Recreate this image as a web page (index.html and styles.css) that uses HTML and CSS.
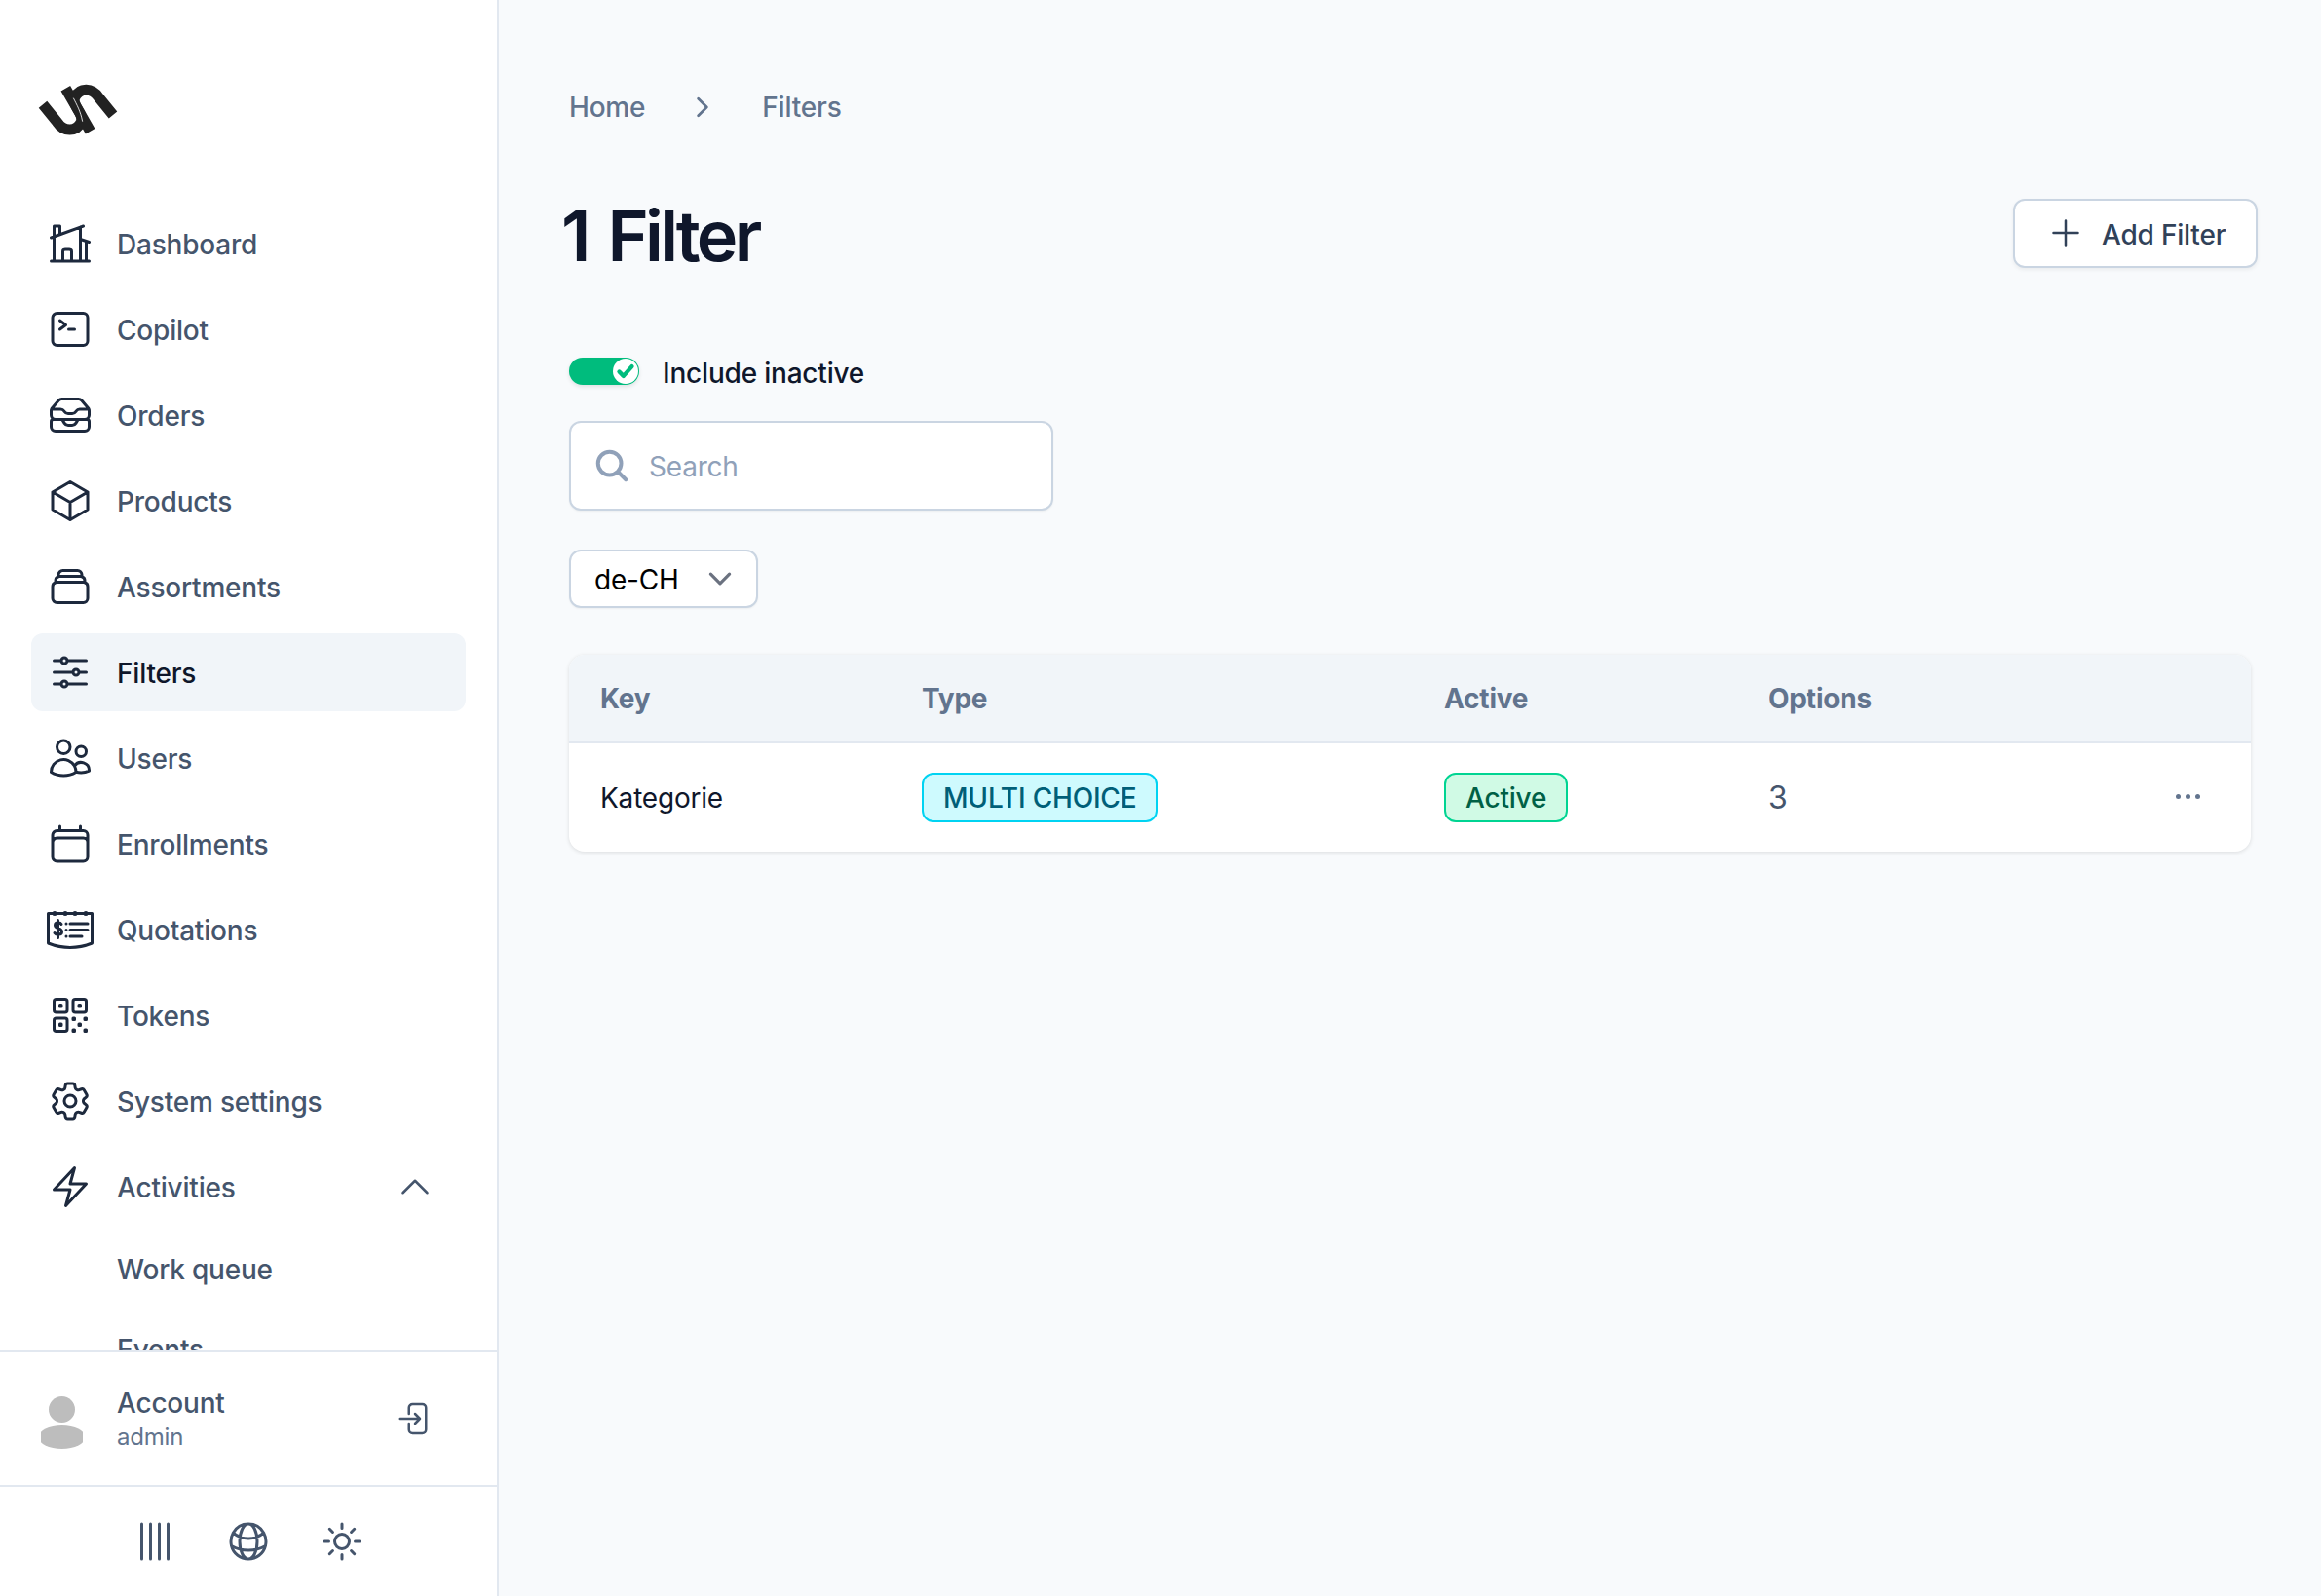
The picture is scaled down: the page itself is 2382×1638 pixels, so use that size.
FILE: index.html
```html
<!DOCTYPE html>
<html lang="en">
  <head>
    <meta charset="UTF-8" />
    <meta name="viewport" content="width=device-width, initial-scale=1.0" />
    <title>Filters</title>
    <link rel="stylesheet" href="styles.css">
  </head>

  <body>
    <div class="layout">
      <aside class="sidebar">
        <div class="logo-wrap">
          <svg class="logo" viewBox="0 0 360 240" fill="none" stroke="#222" stroke-width="33">
            <path d="M72 112L116 166C136 196 174 198 190 166C194 156 190 146 185 137L142 62" />
            <path d="M288 144L244 90C224 60 186 58 170 90C166 100 170 110 175 119L218 194" />
            <path d="M166 92C176 112 188 132 194 164" stroke="#fff" stroke-width="2.5" />
          </svg>
        </div>

        <nav class="nav">
          <a class="nav-item">
            <svg class="icon" viewBox="0 0 24 24"><path d="M8.25 21v-4.875c0-.621.504-1.125 1.125-1.125h2.25c.621 0 1.125.504 1.125 1.125V21m0 0h4.5V3.545M12.75 21h7.5V10.75M2.25 21h1.5m18 0h-18M2.25 9l4.5-1.636M18.75 3l-1.5.545m0 6.205l3 1m1.5.5l-1.5-.5M6.75 7.364V3h-3v18m3-13.636l10.5-3.819" /></svg>
            Dashboard
          </a>
          <a class="nav-item">
            <svg class="icon" viewBox="0 0 24 24"><path d="M6.75 7.5l3 2.25-3 2.25m4.5 0h3m-9 8.25h13.5A2.25 2.25 0 0021 18V6a2.25 2.25 0 00-2.25-2.25H5.25A2.25 2.25 0 003 6v12a2.25 2.25 0 002.25 2.25z" /></svg>
            Copilot
          </a>
          <a class="nav-item">
            <svg class="icon" viewBox="0 0 24 24"><path d="M7.875 14.25l1.214 1.942a2.25 2.25 0 001.908 1.058h2.006c.776 0 1.497-.4 1.908-1.058l1.214-1.942M2.41 9h4.636a2.25 2.25 0 011.872 1.002l.164.246a2.25 2.25 0 001.872 1.002h2.092a2.25 2.25 0 001.872-1.002l.164-.246A2.25 2.25 0 0116.954 9h4.636M2.41 9a2.25 2.25 0 00-.16.832V12a2.25 2.25 0 002.25 2.25h15A2.25 2.25 0 0021.75 12V9.832c0-.287-.055-.57-.16-.832M2.41 9a2.25 2.25 0 01.382-.632l3.285-3.832a2.25 2.25 0 011.708-.786h8.43c.657 0 1.281.287 1.709.786l3.284 3.832c.163.19.291.404.382.632M4.5 20.25h15A2.25 2.25 0 0021.75 18v-2.625c0-.621-.504-1.125-1.125-1.125H3.375c-.621 0-1.125.504-1.125 1.125V18a2.25 2.25 0 002.25 2.25z" /></svg>
            Orders
          </a>
          <a class="nav-item">
            <svg class="icon" viewBox="0 0 24 24"><path d="M21 7.5l-9-5.25L3 7.5m18 0l-9 5.25m9-5.25v9l-9 5.25M3 7.5l9 5.25M3 7.5v9l9 5.25m0-9v9" /></svg>
            Products
          </a>
          <a class="nav-item">
            <svg class="icon" viewBox="0 0 24 24"><path d="M6 6.878V6a2.25 2.25 0 012.25-2.25h7.5A2.25 2.25 0 0118 6v.878m-12 0c.235-.083.487-.128.75-.128h10.5c.263 0 .515.045.75.128m-12 0A2.25 2.25 0 004.5 9v.878m13.5-3A2.25 2.25 0 0119.5 9v.878m0 0a2.246 2.246 0 00-.75-.128H5.25c-.263 0-.515.045-.75.128m15 0A2.25 2.25 0 0121 12v6a2.25 2.25 0 01-2.25 2.25H5.25A2.25 2.25 0 013 18v-6c0-.98.626-1.813 1.5-2.122" /></svg>
            Assortments
          </a>
          <a class="nav-item active">
            <svg class="icon" viewBox="0 0 24 24"><path d="M10.5 6h9.75M10.5 6a1.5 1.5 0 11-3 0m3 0a1.5 1.5 0 10-3 0M3.75 6H7.5m3 12h9.75m-9.75 0a1.5 1.5 0 01-3 0m3 0a1.5 1.5 0 00-3 0m-3.75 0H7.5m9-6h3.75m-3.75 0a1.5 1.5 0 01-3 0m3 0a1.5 1.5 0 00-3 0m-9.75 0h9.75" /></svg>
            Filters
          </a>
          <a class="nav-item">
            <svg class="icon" viewBox="0 0 24 24"><path d="M15 19.128a9.38 9.38 0 002.625.372 9.337 9.337 0 004.121-.952 4.125 4.125 0 00-7.533-2.493M15 19.128v-.003c0-1.113-.285-2.16-.786-3.07M15 19.128v.106A12.318 12.318 0 018.624 21c-2.331 0-4.512-.645-6.374-1.766l-.001-.109a6.375 6.375 0 0111.964-3.07M12 6.375a3.375 3.375 0 11-6.75 0 3.375 3.375 0 016.75 0zm8.25 2.25a2.625 2.625 0 11-5.25 0 2.625 2.625 0 015.25 0z" /></svg>
            Users
          </a>
          <a class="nav-item">
            <svg class="icon" viewBox="0 0 24 24"><path d="M6.75 3v2.25M17.25 3v2.25M3 18.75V7.5a2.25 2.25 0 012.25-2.25h13.5A2.25 2.25 0 0121 7.5v11.25m-18 0A2.25 2.25 0 005.25 21h13.5A2.25 2.25 0 0021 18.75m-18 0v-7.5A2.25 2.25 0 015.25 9h13.5A2.25 2.25 0 0121 11.25v7.5" /></svg>
            Enrollments
          </a>
          <a class="nav-item">
            <svg class="icon icon-quote" viewBox="0 0 48 48">
              <path d="M1.5 7.5V38Q24 47 46.5 38V7.5H1.5Z" />
              <path d="M8 7.5h.01M19 7.5h.01M29 7.5h.01M40 7.5h.01" stroke-width="5" />
              <path d="M15 18.5C14 16.5 8.5 16 8.5 19.5C8.5 23.5 15.5 22 15.5 26.5C15.5 30 9.5 29.5 8 27.5M11.5 14.5V32.5" />
              <path d="M20 18h.01M20 24.5h.01M20 31h.01" />
              <path d="M24 18H42M24 24.5H42M24 31H36" />
            </svg>
            Quotations
          </a>
          <a class="nav-item">
            <svg class="icon" viewBox="0 0 24 24"><path d="M3.75 4.875c0-.621.504-1.125 1.125-1.125h4.5c.621 0 1.125.504 1.125 1.125v4.5c0 .621-.504 1.125-1.125 1.125h-4.5A1.125 1.125 0 013.75 9.375v-4.5zM3.75 14.625c0-.621.504-1.125 1.125-1.125h4.5c.621 0 1.125.504 1.125 1.125v4.5c0 .621-.504 1.125-1.125 1.125h-4.5a1.125 1.125 0 01-1.125-1.125v-4.5zM13.5 4.875c0-.621.504-1.125 1.125-1.125h4.5c.621 0 1.125.504 1.125 1.125v4.5c0 .621-.504 1.125-1.125 1.125h-4.5A1.125 1.125 0 0113.5 9.375v-4.5z" /><path d="M6.75 6.75h.75v.75h-.75v-.75zM6.75 16.5h.75v.75h-.75v-.75zM16.5 6.75h.75v.75h-.75v-.75zM13.5 13.5h.75v.75h-.75v-.75zM13.5 19.5h.75v.75h-.75v-.75zM19.5 13.5h.75v.75h-.75v-.75zM19.5 19.5h.75v.75h-.75v-.75zM16.5 16.5h.75v.75h-.75v-.75z" /></svg>
            Tokens
          </a>
          <a class="nav-item">
            <svg class="icon" viewBox="0 0 24 24"><path d="M9.594 3.94c.09-.542.56-.94 1.11-.94h2.593c.55 0 1.02.398 1.11.94l.213 1.281c.063.374.313.686.645.87.074.04.147.083.22.127.324.196.72.257 1.075.124l1.217-.456a1.125 1.125 0 011.37.49l1.296 2.247a1.125 1.125 0 01-.26 1.431l-1.003.827c-.293.24-.438.613-.431.992a6.759 6.759 0 010 .255c-.007.378.138.75.43.99l1.005.828c.424.35.534.954.26 1.43l-1.298 2.247a1.125 1.125 0 01-1.369.491l-1.217-.456c-.355-.133-.75-.072-1.076.124a6.57 6.57 0 01-.22.128c-.331.183-.581.495-.644.869l-.213 1.28c-.09.543-.56.941-1.11.941h-2.594c-.55 0-1.02-.398-1.11-.94l-.213-1.281c-.062-.374-.312-.686-.644-.87a6.52 6.52 0 01-.22-.127c-.325-.196-.72-.257-1.076-.124l-1.217.456a1.125 1.125 0 01-1.369-.49l-1.297-2.247a1.125 1.125 0 01.26-1.431l1.004-.827c.292-.24.437-.613.43-.992a6.932 6.932 0 010-.255c.007-.378-.138-.75-.43-.99l-1.004-.828a1.125 1.125 0 01-.26-1.43l1.297-2.247a1.125 1.125 0 011.37-.491l1.216.456c.356.133.751.072 1.076-.124.072-.044.146-.087.22-.128.332-.183.582-.495.644-.869l.214-1.281z" /><path d="M15 12a3 3 0 11-6 0 3 3 0 016 0z" /></svg>
            System settings
          </a>
          <a class="nav-item">
            <svg class="icon" viewBox="0 0 24 24"><path d="M3.75 13.5l10.5-11.25L12 10.5h8.25L9.75 21.75 12 13.5H3.75z" /></svg>
            Activities
            <svg class="icon icon-chevron" viewBox="0 0 24 24"><path d="M4.5 15.75l7.5-7.5 7.5 7.5" /></svg>
          </a>
          <div class="subnav">
            <a class="subnav-item">Work queue</a>
            <a class="subnav-item">Events</a>
          </div>
        </nav>

        <div class="account">
          <svg class="avatar" viewBox="0 0 43 58">
            <circle cx="21.5" cy="17.5" r="13.5" />
            <ellipse cx="21.5" cy="46" rx="24" ry="12" />
          </svg>
          <div class="account-text">
            <div class="account-name">Account</div>
            <div class="account-user">admin</div>
          </div>
          <svg class="icon icon-login" viewBox="0 0 24 24"><path d="M8.25 9V5.25A2.25 2.25 0 0110.5 3h6a2.25 2.25 0 012.25 2.25v13.5A2.25 2.25 0 0116.5 21h-6a2.25 2.25 0 01-2.25-2.25V15M12 9l3 3m0 0l-3 3m3-3H2.25" /></svg>
        </div>

        <div class="sidebar-tools">
          <svg class="icon" viewBox="0 0 24 24"><path d="M5.25 3v18M9.75 3v18M14.25 3v18M18.75 3v18" /></svg>
          <svg class="icon" viewBox="0 0 24 24"><path d="M12 21a9.004 9.004 0 008.716-6.747M12 21a9.004 9.004 0 01-8.716-6.747M12 21c2.485 0 4.5-4.03 4.5-9S14.485 3 12 3m0 18c-2.485 0-4.5-4.03-4.5-9S9.515 3 12 3m0 0a8.997 8.997 0 017.843 4.582M12 3a8.997 8.997 0 00-7.843 4.582m15.686 0A11.953 11.953 0 0112 10.5c-2.998 0-5.74-1.1-7.843-2.918m15.686 0A8.959 8.959 0 0121 12c0 .778-.099 1.533-.284 2.253m0 0A17.919 17.919 0 0112 16.5c-3.162 0-6.133-.815-8.716-2.247m0 0A9.015 9.015 0 013 12c0-1.605.42-3.113 1.157-4.418" /></svg>
          <svg class="icon" viewBox="0 0 24 24"><path d="M12 3v2.25m6.364.386l-1.591 1.591M21 12h-2.25m-.386 6.364l-1.591-1.591M12 18.75V21m-4.773-4.227l-1.591 1.591M5.25 12H3m4.227-4.773L5.636 5.636M15.75 12a3.75 3.75 0 11-7.5 0 3.75 3.75 0 017.5 0z" /></svg>
        </div>
      </aside>

      <main class="main">
        <div class="breadcrumb">
          <a>Home</a>
          <svg class="crumb-sep" viewBox="0 0 24 24"><path d="M8.25 4.5l7.5 7.5-7.5 7.5" /></svg>
          <a>Filters</a>
        </div>

        <div class="page-head">
          <h1>1 Filter</h1>
          <button class="add-btn">
            <svg class="plus" viewBox="0 0 24 24"><path d="M12 4.5v15m7.5-7.5h-15" /></svg>
            Add Filter
          </button>
        </div>

        <label class="toggle-row">
          <span class="toggle">
            <span class="toggle-knob">
              <svg viewBox="0 0 24 24"><path d="M6 12.5l4 4 8-9" /></svg>
            </span>
          </span>
          Include inactive
        </label>

        <div class="search">
          <svg viewBox="0 0 24 24"><path d="M21 21l-5.197-5.197m0 0A7.5 7.5 0 105.196 5.196a7.5 7.5 0 0010.607 10.607z" /></svg>
          <span>Search</span>
        </div>

        <div class="select">
          de-CH
          <svg viewBox="0 0 20 20"><path d="M4 7l6 6 6-6" /></svg>
        </div>

        <div class="table-card">
          <table>
            <thead>
              <tr>
                <th class="col-key">Key</th>
                <th class="col-type">Type</th>
                <th class="col-active">Active</th>
                <th>Options</th>
                <th></th>
              </tr>
            </thead>
            <tbody>
              <tr>
                <td class="cell-key">Kategorie</td>
                <td><span class="badge badge-cyan">MULTI CHOICE</span></td>
                <td><span class="badge badge-green">Active</span></td>
                <td class="cell-count">3</td>
                <td class="cell-more">
                  <span class="dots"><i></i><i></i><i></i></span>
                </td>
              </tr>
            </tbody>
          </table>
        </div>
      </main>
    </div>
  </body>
</html>
```

FILE: styles.css
```css
* {
  box-sizing: border-box;
}

body {
  margin: 0;
  font-family: "Inter", "Liberation Sans", sans-serif;
  background-color: #f8fafc;
  color: #0f172b;
  font-size: 28px;
  line-height: 40px;
  letter-spacing: -0.2px;
}

.layout {
  display: flex;
  height: 100vh;
  overflow: hidden;
}

/* sidebar */
.sidebar {
  width: 512px;
  flex-shrink: 0;
  display: flex;
  flex-direction: column;
  background: #ffffff;
  border-right: 2px solid #e2e8f0;
}

.logo-wrap {
  height: 210px;
  flex-shrink: 0;
  padding: 70px 0 0 20px;
}

.logo {
  display: block;
  width: 120px;
  height: 80px;
}

.nav {
  flex: 1;
  min-height: 0;
  overflow: hidden;
  display: flex;
  flex-direction: column;
  gap: 8px;
  padding: 0 32px;
}

.nav-item {
  display: flex;
  align-items: center;
  flex-shrink: 0;
  height: 80px;
  padding: 2px 0 0 16px;
  border-radius: 12px;
  color: #45556c;
  font-weight: 500;
}

.nav-item .icon {
  margin: -2px 24px 0 0;
}

.nav-item.active {
  background: #f1f5f9;
  color: #0f172b;
}

.icon {
  display: block;
  width: 48px;
  height: 48px;
  flex-shrink: 0;
  fill: none;
  stroke: #1d293d;
  stroke-width: 1.5;
  stroke-linecap: round;
  stroke-linejoin: round;
}

.icon-quote {
  stroke-width: 3;
}

.nav-item .icon-chevron {
  width: 40px;
  height: 40px;
  margin: -2px 32px 0 auto;
  stroke: #45556c;
}

.subnav {
  display: flex;
  flex-direction: column;
  gap: 2px;
  margin-top: -4px;
}

.subnav-item {
  display: flex;
  align-items: center;
  flex-shrink: 0;
  height: 80px;
  padding: 2px 0 0 88px;
  color: #45556c;
  font-weight: 500;
}

.account {
  height: 140px;
  flex-shrink: 0;
  display: flex;
  align-items: center;
  padding-left: 42px;
  border-top: 2px solid #e2e8f0;
  border-bottom: 2px solid #e2e8f0;
}

.avatar {
  width: 43px;
  height: 58px;
  fill: #bdbdbd;
  margin-top: 4px;
}

.account-text {
  margin-left: 35px;
  flex: 1;
}

.account-name {
  color: #45556c;
  font-weight: 500;
  line-height: 38px;
}

.account-user {
  color: #62748e;
  font-size: 24px;
  line-height: 32px;
}

.icon-login {
  width: 40px;
  height: 40px;
  margin-right: 64px;
  stroke: #45556c;
}

.sidebar-tools {
  height: 112px;
  flex-shrink: 0;
  display: flex;
  align-items: center;
  justify-content: center;
  gap: 48px;
}

.sidebar-tools .icon {
  stroke: #45556c;
}

/* main */
.main {
  flex: 1;
  min-width: 0;
  padding: 90px 65px 0 72px;
}

.breadcrumb {
  display: flex;
  align-items: center;
  color: #62748e;
  font-weight: 500;
}

.crumb-sep {
  width: 28px;
  height: 28px;
  margin: 0 47px 0 45px;
  fill: none;
  stroke: #62748e;
  stroke-width: 2.4;
  stroke-linecap: round;
  stroke-linejoin: round;
}

.page-head {
  display: flex;
  align-items: center;
  justify-content: space-between;
  margin-top: 72px;
  height: 80px;
}

h1 {
  margin: 0 0 0 -8px;
  font-size: 72px;
  line-height: 80px;
  font-weight: 600;
  letter-spacing: -3.6px;
  word-spacing: 6px;
  color: #0f172b;
}

.add-btn {
  display: flex;
  align-items: center;
  width: 251px;
  height: 71px;
  margin-top: -6px;
  padding: 3px 0 0 32px;
  background: #ffffff;
  border: 2px solid #cad5e2;
  border-radius: 12px;
  box-shadow: 0 2px 4px rgba(0, 0, 0, 0.06);
  color: #314158;
  font-family: inherit;
  font-size: 28px;
  font-weight: 500;
  letter-spacing: -0.2px;
}

.plus {
  width: 40px;
  height: 40px;
  margin: -3px 17px 0 0;
  fill: none;
  stroke: #314158;
  stroke-width: 1.5;
  stroke-linecap: round;
}

.toggle-row {
  display: flex;
  align-items: center;
  margin-top: 81px;
  height: 40px;
  font-weight: 500;
}

.toggle {
  position: relative;
  display: block;
  width: 72px;
  height: 28px;
  margin-right: 24px;
  margin-top: -4px;
  background: #00bc7d;
  border-radius: 14px;
  box-shadow: 0 2px 4px rgba(0, 0, 0, 0.1);
}

.toggle-knob {
  position: absolute;
  right: 1px;
  top: 1px;
  width: 26px;
  height: 26px;
  background: #ffffff;
  border-radius: 50%;
}

.toggle-knob svg {
  display: block;
  width: 26px;
  height: 26px;
  fill: none;
  stroke: #00bc7d;
  stroke-width: 4;
  stroke-linecap: round;
  stroke-linejoin: round;
}

.search {
  display: flex;
  align-items: center;
  width: 497px;
  height: 92px;
  margin-top: 29px;
  padding-left: 23px;
  background: #ffffff;
  border: 2px solid #cad5e2;
  border-radius: 12px;
  box-shadow: 0 1px 2px rgba(0, 0, 0, 0.05);
  color: #90a1b9;
}

.search span {
  padding-top: 1px;
}

.search svg {
  width: 38px;
  height: 38px;
  margin-right: 19px;
  fill: none;
  stroke: #90a1b9;
  stroke-width: 2.5;
  stroke-linecap: round;
}

.select {
  display: flex;
  align-items: center;
  justify-content: space-between;
  width: 194px;
  height: 60px;
  margin-top: 40px;
  padding: 2px 21px 0 24px;
  background: #ffffff;
  border: 2px solid #cad5e2;
  border-radius: 12px;
  box-shadow: 0 1px 2px rgba(0, 0, 0, 0.05);
  color: #000000;
}

.select svg {
  width: 32px;
  height: 32px;
  margin-top: -2px;
  fill: none;
  stroke: #6b7280;
  stroke-width: 2;
  stroke-linecap: round;
  stroke-linejoin: round;
}

.table-card {
  width: 1726px;
  margin-top: 48px;
  background: #ffffff;
  border-radius: 16px;
  overflow: hidden;
  box-shadow: 0 1px 4px rgba(0, 0, 0, 0.12);
}

table {
  width: 100%;
  border-collapse: collapse;
  table-layout: fixed;
}

th {
  height: 90px;
  padding: 0 0 0 32px;
  text-align: left;
  background: #f1f5f9;
  border-bottom: 2px solid #e2e8f0;
  color: #62748e;
  font-weight: 700;
}

.col-key {
  width: 330px;
}

.col-type {
  width: 536px;
}

.col-active {
  width: 333px;
}

td {
  height: 112px;
  padding: 0 0 0 32px;
}

.cell-key {
  color: #0f172b;
}

.cell-count {
  color: #45556c;
  font-size: 32px;
}

.cell-more {
  padding: 0 52px 0 0;
  text-align: right;
}

.dots {
  display: inline-flex;
  gap: 5px;
  margin-bottom: 6px;
  vertical-align: middle;
}

.dots i {
  display: block;
  width: 5px;
  height: 5px;
  border-radius: 50%;
  background: #62748e;
}

.badge {
  display: inline-block;
  height: 51px;
  padding: 0 20px;
  border: 2px solid;
  border-radius: 12px;
  line-height: 49px;
  font-weight: 500;
  vertical-align: middle;
}

.badge-cyan {
  background: #cefafe;
  border-color: #00d3f2;
  color: #005f78;
}

.badge-green {
  background: #d0fae5;
  border-color: #00d492;
  color: #006045;
}
```
